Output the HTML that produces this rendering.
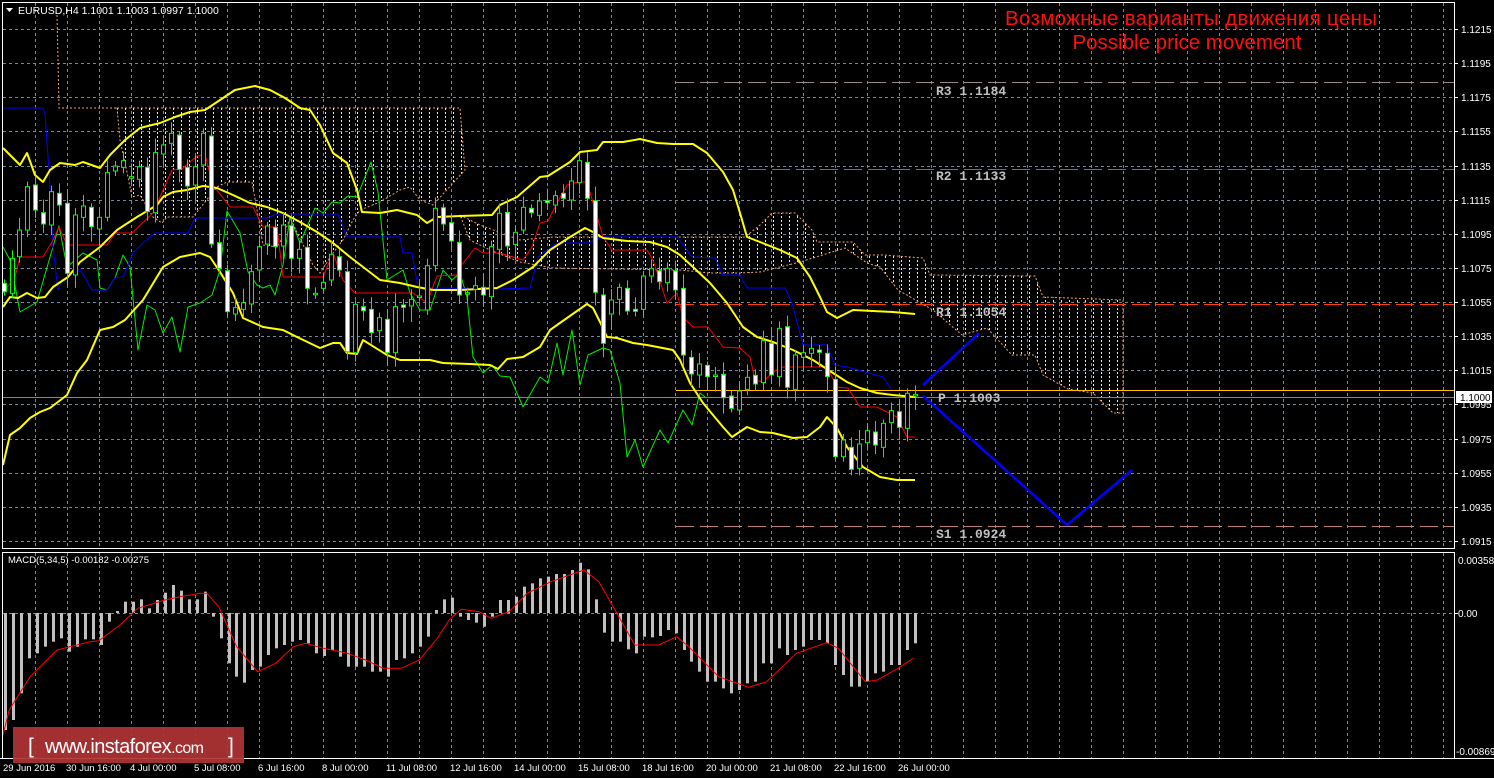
<!DOCTYPE html>
<html><head><meta charset="utf-8"><style>
html,body{margin:0;padding:0;background:#000;width:1494px;height:778px;overflow:hidden}
svg{display:block}
text{font-family:"Liberation Sans",sans-serif}
</style></head><body>
<svg id="s" width="1494" height="778" xmlns="http://www.w3.org/2000/svg">
<defs>
<pattern id="hatch" width="8" height="400" patternUnits="userSpaceOnUse" x="1" y="0">
<line x1="4.5" y1="0" x2="4.5" y2="400" stroke="#f4e4e0" stroke-width="1" stroke-dasharray="2,2"/>
</pattern>
</defs>
<rect width="1494" height="778" fill="#000"/>
<g id="grid" stroke="#778899" stroke-width="1" stroke-dasharray="3,3"></g>
<g id="cloud"></g>
<g id="levels"></g>
<g id="ind" fill="none"></g>
<g id="candles"></g>
<g id="macd"></g>
<rect x="2.5" y="2.5" width="1452" height="546" fill="none" stroke="#fff"/>
<rect x="2.5" y="552.5" width="1452" height="206" fill="none" stroke="#fff"/>
<line x1="0" y1="758.5" x2="1494" y2="758.5" stroke="#fff"/>
<polygon points="6,8 13,8 9.5,12" fill="#fff"/>
<text x="18" y="14" fill="#fff" font-size="10.5">EURUSD,H4  1.1001 1.1003 1.0997 1.1000</text>
<text x="1191" y="25" fill="#ff1010" font-size="20.5" text-anchor="middle" textLength="372">Возможные варианты движения цены</text>
<text x="1187" y="49" fill="#ff1010" font-size="20.5" text-anchor="middle">Possible price movement</text>
<g font-size="13" font-weight="bold" fill="#c0c0c0">
<text x="936" y="95" style="font-family:'Liberation Mono',monospace">R3 1.1184</text>
<text x="936" y="180" style="font-family:'Liberation Mono',monospace">R2 1.1133</text>
<text x="936" y="316" style="font-family:'Liberation Mono',monospace">R1 1.1054</text>
<text x="938" y="402" style="font-family:'Liberation Mono',monospace">P 1.1003</text>
<text x="936" y="538" style="font-family:'Liberation Mono',monospace">S1 1.0924</text>
</g>
<polyline points="923,385 979,333" stroke="#0000ff" stroke-width="2.5" fill="none"/>
<polyline points="923,396 1067,525 1132,470" stroke="#0000ff" stroke-width="2.5" fill="none"/>
<g id="axis" fill="#fff" font-size="10"></g>
<rect x="1456" y="391" width="36" height="12" fill="#fff"/>
<text x="1460" y="401" font-size="10" fill="#000">1.1000</text>
<text x="1458" y="564" font-size="10" fill="#fff">0.00358</text>
<text x="1458" y="617" font-size="10" fill="#fff">0.00</text>
<text x="1456" y="755" font-size="10" fill="#fff">-0.00869</text>
<text x="8" y="563" font-size="9.5" fill="#fff">MACD(5,34,5) -0.00182 -0.00275</text>
<g fill="#fff" font-size="9.5">
<text x="3" y="771">29 Jun 2016</text><text x="66" y="771">30 Jun 16:00</text><text x="130" y="771">4 Jul 00:00</text><text x="194" y="771">5 Jul 08:00</text><text x="258" y="771">6 Jul 16:00</text><text x="322" y="771">8 Jul 00:00</text><text x="386" y="771">11 Jul 08:00</text><text x="450" y="771">12 Jul 16:00</text><text x="514" y="771">14 Jul 00:00</text><text x="578" y="771">15 Jul 08:00</text><text x="642" y="771">18 Jul 16:00</text><text x="706" y="771">20 Jul 00:00</text><text x="770" y="771">21 Jul 08:00</text><text x="834" y="771">22 Jul 16:00</text><text x="898" y="771">26 Jul 00:00</text>
</g>
<rect x="13" y="727" width="231" height="36" fill="#b03434" opacity="0.92"/>
<text x="28" y="753" fill="#fff" font-size="21">[</text>
<text x="45" y="753" fill="#fff" font-size="20" letter-spacing="-0.6">www.instaforex<tspan font-size="16">.com</tspan></text>
<text x="228" y="753" fill="#fff" font-size="21">]</text>
</svg>
<script>
var NS="http://www.w3.org/2000/svg";
function el(p,t,a){var e=document.createElementNS(NS,t);for(var k in a)e.setAttribute(k,a[k]);document.getElementById(p).appendChild(e);return e;}
for(var x=35;x<1454;x+=32){el("grid","line",{x1:x+.5,y1:3,x2:x+.5,y2:548});el("grid","line",{x1:x+.5,y1:553,x2:x+.5,y2:758});}
var prices=["1.1215","1.1195","1.1175","1.1155","1.1135","1.1115","1.1095","1.1075","1.1055","1.1035","1.1015","1.0995","1.0975","1.0955","1.0935","1.0915"];
for(var i=0;i<16;i++){var y=Math.round(29+i*34.13);el("grid","line",{x1:3,y1:y+.5,x2:1454,y2:y+.5});
 el("axis","line",{x1:1454,y1:y+.5,x2:1458,y2:y+.5,stroke:"#fff"});
 var t=el("axis","text",{x:1461,y:y+4});t.textContent=prices[i];}
el("grid","line",{x1:3,y1:613.5,x2:1454,y2:613.5});
el("axis","line",{x1:1454,y1:613.5,x2:1458,y2:613.5,stroke:"#fff"});
function poly(p,pts,a){a.points=pts.map(function(q){return q.join(",")}).join(" ");return el(p,"polygon",a);}
var c1=[[117,108],[460,108],[465,170],[433,205],[420,200],[410,187],[400,190],[380,202],[360,210],[353,220],[343,240],[333,253],[320,273],[313,265],[290,218],[283,237],[277,247],[263,245],[257,210],[252,182],[227,182],[217,187],[193,217],[167,217],[162,223],[153,217],[140,195],[132,197],[128,177],[120,140]];
var c2=[[460,215],[480,225],[520,240],[553,237],[745,237],[760,225],[772,213],[795,213],[812,230],[817,242],[853,242],[865,255],[883,255],[923,258],[930,275],[1035,276],[1043,297],[1123,300],[1123,413],[1113,413],[1093,393],[1068,389],[1043,375],[1035,355],[1012,355],[987,328],[962,335],[933,310],[898,290],[880,267],[867,263],[845,248],[800,262],[760,272],[740,273],[710,273],[680,270],[553,268],[520,262],[490,250],[470,240]];
[c1,c2].forEach(function(c){poly("cloud",c,{fill:"url(#hatch)",stroke:"#f0a070","stroke-width":1,"stroke-dasharray":"2,2"});});
el("cloud","polyline",{points:"57,15 58,60 59,108 117,108",fill:"none",stroke:"#f0a070","stroke-dasharray":"2,2"});
el("levels","line",{x1:676,y1:82.5,x2:1454,y2:82.5,stroke:"#9a8a8a","stroke-dasharray":"18,6"});
el("levels","line",{x1:676,y1:169.5,x2:1454,y2:169.5,stroke:"#ff4000","stroke-dasharray":"18,6"});
el("levels","line",{x1:676,y1:304.5,x2:1454,y2:304.5,stroke:"#ff4000","stroke-dasharray":"18,6"});
el("levels","line",{x1:676,y1:390.5,x2:1454,y2:390.5,stroke:"#ffc000"});
el("levels","line",{x1:3,y1:397.5,x2:1454,y2:397.5,stroke:"#778899"});
el("levels","line",{x1:676,y1:526.5,x2:1454,y2:526.5,stroke:"#c08080","stroke-dasharray":"18,6"});
function pl(pts,c,w){el("ind","polyline",{points:pts,stroke:c,"stroke-width":w,"stroke-linejoin":"round"});}
pl("3,247 10,260 20,312 37,302 59,226 67,267 83,253 97,260 100,288 107,290 115,278 123,255 130,267 138,350 147,305 155,310 163,333 172,317 180,352 188,307 200,303 212,295 220,270 227,211 240,233 248,272 257,285 263,288 270,285 275,295 283,265 290,217 300,243 315,208 323,213 332,202 340,203 348,196 357,197 371,162 378,192 387,280 403,270 410,293 420,310 430,310 443,270 452,280 460,273 467,297 473,357 483,373 492,365 500,376 510,377 523,407 540,377 548,383 557,343 563,375 572,330 580,385 588,355 603,348 610,350 620,383 627,457 635,440 643,467 660,430 668,443 683,410 692,425 700,393 705,397","#00ee00",1);
pl("3,108 43,108 45,113 47,143 49,170 53,247 58,290 62,280 67,278 80,269 92,290 107,290 115,278 123,277 133,253 143,243 155,233 188,233 195,218 267,218 277,214 338,214 347,237 400,237 403,253 412,253 418,287 433,288 495,289 530,288 538,257 557,243 588,243 602,237 677,237 692,257 715,258 723,275 740,275 747,288 785,288 792,303 803,345 827,345 835,365 847,367 883,377 892,390","#0000ff",1);
pl("3,293 15,277 20,257 43,257 53,240 59,227 67,245 107,245 115,233 132,233 153,213 163,190 172,170 182,169 197,156 205,155 213,185 230,207 253,207 263,227 277,227 283,277 323,277 333,253 343,280 355,293 413,293 427,303 437,276 457,275 460,267 475,248 483,253 500,253 523,260 532,247 540,223 548,221 557,203 567,185 578,182 587,182 603,237 612,250 647,250 653,260 667,303 677,293 683,317 693,327 708,327 723,347 740,348 750,357 755,380 763,382 773,372 783,367 827,367 837,387 848,388 860,407 877,407 897,417 907,437 915,437","#ff0000",1);
pl("3,148 20,165 27,153 35,175 43,182 50,170 60,163 75,165 83,162 100,168 110,155 125,140 140,128 160,123 175,117 190,112 205,110 220,100 235,90 255,86 270,90 285,98 300,108 310,110 320,125 333,153 347,163 357,190 362,212 380,213 397,210 417,215 427,223 437,217 460,216 492,215 500,205 517,197 540,177 548,176 570,162 580,152 597,150 603,142 623,142 640,139 657,143 673,144 693,144 707,153 723,172 733,190 740,213 747,237 760,242 780,250 797,258 810,277 820,297 827,312 837,318 853,310 893,312 915,314","#ffff00",2);
pl("3,307 10,297 18,298 27,293 37,298 45,297 53,287 68,277 80,262 100,247 117,230 137,217 157,205 163,197 173,192 187,190 203,186 217,188 233,195 250,203 267,207 283,213 300,222 317,232 333,243 350,257 367,270 380,280 400,283 417,287 433,290 460,290 497,288 513,280 533,267 550,250 570,237 585,228 593,232 603,238 627,241 650,242 667,247 680,255 693,267 710,283 727,303 743,327 757,337 773,342 793,350 813,360 833,373 847,382 860,388 877,393 893,395 915,397","#ffff00",2);
pl("3,465 10,435 20,428 30,418 40,412 50,408 67,395 77,373 87,360 100,330 113,327 125,320 143,300 163,267 180,257 200,253 210,257 220,272 233,293 243,318 263,327 283,330 297,337 320,348 333,343 340,343 347,353 357,354 363,340 387,355 400,360 430,360 443,363 470,364 490,365 498,369 507,359 523,357 540,347 550,330 567,318 587,304 593,308 600,322 607,337 617,338 633,343 647,345 673,350 680,360 690,383 703,403 723,427 732,437 747,427 760,432 773,433 793,438 807,437 820,427 827,417 837,428 847,447 863,467 880,477 897,480 915,480","#ffff00",2);
var A=[[12,610,635,1],[35,535,640,0],[58,450,530,0],[82,320,450,0],[106,315,390,1],[130,398,432,1],[154,335,435,0],[178,340,375,1],[202,370,580,1],[226,405,585,0],[250,378,412,0],[274,382,440,1],[298,412,447,0],[322,278,412,0],[346,258,273,0],[370,242,262,0],[394,290,295,0],[418,260,298,0],[442,262,395,1],[466,218,398,0],[490,195,222,0],[514,160,190,0],[538,165,268,1],[562,262,318,1],[586,260,315,0],[610,160,255,0],[634,168,492,1],[658,488,565,1],[682,572,695,1],[706,683,702,0],[730,668,688,0],[754,575,672,0],[778,500,570,0],[802,438,492,0],[826,442,500,1],[850,435,498,0],[874,437,535,1],[898,508,535,0],[922,502,625,1],[946,640,642,0],[970,607,625,0],[994,523,600,0],[1018,530,570,1],[1042,575,815,1],[1066,673,818,0],[1090,680,692,1],[1114,688,758,1],[1138,713,752,0],[1162,718,818,1],[1186,680,818,0],[1210,675,682,1],[1234,658,678,0],[1258,648,652,0],[1282,557,690,0],[1306,385,557,0],[1330,383,432,1],[1354,428,483,1],[1378,487,645,1]];
var B=[[22,578,582,0],[46,557,568,0],[70,562,585,1],[94,440,590,0],[118,340,448,0],[142,337,438,1],[166,397,433,0],[190,322,390,0],[214,325,338,1],[238,303,346,0],[262,302,308,1],[286,287,315,0],[310,280,295,1],[334,243,300,0],[358,182,248,0],[382,187,295,1],[406,302,577,1],[430,585,730,1],[454,600,642,0],[478,562,598,0],[502,565,633,1],[526,628,634,1],[550,528,628,0],[574,505,528,0],[598,512,545,1],[622,505,548,0],[646,512,570,1],[670,565,765,1],[694,772,822,1],[718,792,825,0],[742,796,830,1],[766,825,828,0],[790,823,893,1],[814,888,925,1],[838,873,930,0],[862,832,868,0],[886,826,852,1],[910,722,848,0],[934,730,825,1],[958,685,830,0],[982,680,862,1],[1006,765,868,0],[1030,758,772,0],[1054,745,760,0],[1078,750,757,1],[1102,760,830,1],[1126,838,1070,1],[1150,1020,1070,0],[1174,1042,1108,1],[1198,1032,1105,0],[1222,992,1028,0],[1246,996,1035,1],[1270,970,1042,0],[1294,932,968,0],[1318,935,982,1],[1342,880,985,0],[1366,883,888,0]];
var C=[];A.forEach(function(c){C.push([c[0]/3,80+c[1]/3,80+c[2]/3,c[3]]);});
B.forEach(function(c){C.push([460+c[0]/3,100+c[1]/3,100+c[2]/3,c[3]]);});
C.forEach(function(c,i){var x=Math.round(c[0])+.5,t=c[1],b=Math.max(c[2],t+1.5);
 var w1=4+(i*37)%11,w2=4+(i*53)%13;
 el("candles","line",{x1:x,y1:t-w1,x2:x,y2:b+w2,stroke:"#00ff00"});
 el("candles","rect",{x:x-2,y:t,width:4,height:b-t,fill:c[3]?"#fff":"#000",stroke:"#00ff00","stroke-width":1});});
var M=[540,510,430,325,310,290,275,265,305,290,268,268,285,215,183,155,155,148,175,150,128,105,122,148,148,125,200,265,340,380,398,360,350,315,295,285,275,270,280,310,318,300,320,350,350,350,365,365,380,330,325,310,290,260,180,148,143,200,210,218,230,200,150,150,140,110,100,85,80,72,72,60,38,58,148,248,275,275,298,310,260,262,258,240,250,300,335,365,395,395,415,430,420,400,395,340,340,295,315,300,290,270,270,280,345,375,410,410,395,370,365,345,345,300,280];
var n=M.length;M.forEach(function(v,i){var x=Math.round(5+i*910/(n-1))+.5;var y=550+v/3;el("macd","line",{x1:x,y1:613,x2:x,y2:y,stroke:"#c0c0c0","stroke-width":3});});
var S=[[15,480],[50,380],[95,300],[150,275],[165,272],[200,225],[230,175],[275,150],[300,140],[335,130],[345,130],[365,170],[395,290],[430,365],[460,340],[490,290],[510,280],[540,295],[580,310],[610,330],[640,355],[670,355],[700,330],[730,265],[750,210],[770,178],[800,185],[820,205],[850,185],[880,130],[920,95],[975,60],[1000,95],[1030,190],[1060,285],[1100,285],[1130,260],[1150,290],[1200,380],[1250,412],[1280,395],[1330,310],[1380,278],[1400,295],[1445,395],[1465,390],[1500,355],[1525,325]];
var sp=S.map(function(q){return (5+(q[0]-8)*910/1520).toFixed(1)+","+(550+q[1]/3).toFixed(1);}).join(" ");
sp="3,735 "+sp;
el("macd","polyline",{points:sp,fill:"none",stroke:"#ff0000","stroke-width":1});
</script>
</body></html>
